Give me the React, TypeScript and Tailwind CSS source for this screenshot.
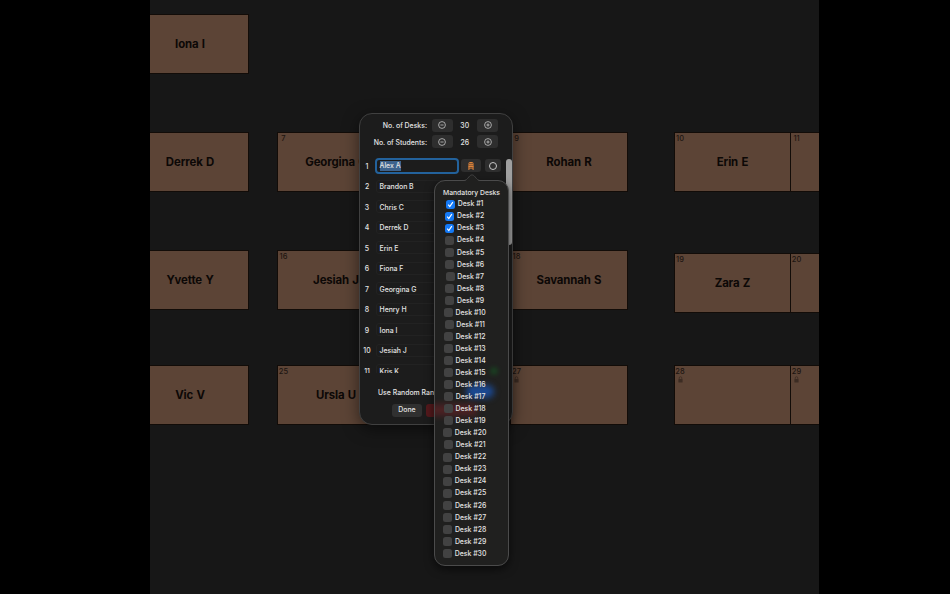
import { useState } from 'react';

type Desk = { x: number; y: number; num?: number; name?: string; locked?: boolean };

const desks: Desk[] = [
  { x: -19, y: 14, name: 'Iona I' },
  { x: -19, y: 132, name: 'Derrek D' },
  { x: 127, y: 132, num: 7, name: 'Georgina G' },
  { x: 360, y: 132, num: 9, name: 'Rohan R' },
  { x: 523.5, y: 132, num: 10, name: 'Erin E' },
  { x: 640, y: 132, num: 11 },
  { x: -19, y: 250, name: 'Yvette Y' },
  { x: 127, y: 250, num: 16, name: 'Jesiah J' },
  { x: 360, y: 250, num: 18, name: 'Savannah S' },
  { x: 523.5, y: 253, num: 19, name: 'Zara Z' },
  { x: 640, y: 253, num: 20 },
  { x: -19, y: 365, name: 'Vic V' },
  { x: 127, y: 365, num: 25, name: 'Ursla U' },
  { x: 360, y: 365, num: 27, locked: true },
  { x: 523.5, y: 365, num: 28, locked: true },
  { x: 640, y: 365, num: 29, locked: true },
];

const students = [
  'Alex A',
  'Brandon B',
  'Chris C',
  'Derrek D',
  'Erin E',
  'Fiona F',
  'Georgina G',
  'Henry H',
  'Iona I',
  'Jesiah J',
  'Kris K',
];

function DeskCard({ desk }: { desk: Desk }) {
  return (
    <div
      className="absolute w-[118px] h-[60px] border border-[#120c08] bg-[#5c4436] text-[#0c0806] flex items-center justify-center"
      style={{ left: desk.x, top: desk.y }}
    >
      {desk.num && (
        <div className="absolute left-0 top-[1px] w-[11px] flex flex-col items-center text-[7.5px] leading-[10px] text-[#1d1511]">
          <span>{desk.num}</span>
          {desk.locked && (
            <svg width="5" height="7" viewBox="0 0 5 7" className="-mt-px opacity-50">
              <path d="M1.2 3V2a1.3 1.3 0 0 1 2.6 0v1" fill="none" stroke="#1d1511" strokeWidth="0.8" />
              <rect x="0.4" y="3" width="4.2" height="3.5" rx="0.6" fill="#1d1511" />
            </svg>
          )}
        </div>
      )}
      <span className="pt-px text-[11.4px] font-bold tracking-[-0.12px] [word-spacing:0.8px] whitespace-nowrap">
        {desk.name}
      </span>
    </div>
  );
}

function Stepper({ label, value, onChange }: { label: string; value: number; onChange: (v: number) => void }) {
  const button = 'w-[21px] h-[13px] rounded-[3px] bg-[#2e2e2e] flex items-center justify-center text-[#cfcfcf]';
  return (
    <div className="flex items-center h-[16.5px]">
      <span className="w-[67px] pt-[2px] whitespace-nowrap flex justify-end">{label}</span>
      <button className={`${button} ml-[4.5px]`} onClick={() => onChange(value - 1)}>
        <svg width="8" height="8" viewBox="0 0 8 8" fill="none" stroke="currentColor" strokeWidth="0.75">
          <circle cx="4" cy="4" r="3.4" />
          <path d="M2.4 4h3.2" />
        </svg>
      </button>
      <span className="w-[24.5px] pt-[2px] text-center">{value}</span>
      <button className={button} onClick={() => onChange(value + 1)}>
        <svg width="8" height="8" viewBox="0 0 8 8" fill="none" stroke="currentColor" strokeWidth="0.75">
          <circle cx="4" cy="4" r="3.4" />
          <path d="M2.4 4h3.2M4 2.4v3.2" />
        </svg>
      </button>
    </div>
  );
}

function ChairIcon() {
  return (
    <svg width="6" height="8" viewBox="0 0 6 8" fill="none" stroke="#e0843a" strokeWidth="1">
      <path d="M1 4V1.1Q1 .5 1.6 .5H4.4Q5 .5 5 1.1V4M3 .5V4M1 2.7H5" />
      <path d="M.4 4.5H5.6M.9 4.5V8M5.1 4.5V8M1 6.1H5" />
    </svg>
  );
}

function MandatoryDesks() {
  const [checked, setChecked] = useState([1, 2, 3]);
  const toggle = (n: number) =>
    setChecked(checked.includes(n) ? checked.filter(c => c !== n) : [...checked, n]);

  return (
    <div className="absolute left-[434px] top-[180px] w-[75px] h-[386px] rounded-[11px] border border-[#4b4b4b] bg-[#20201f] shadow-[0_3px_10px_rgba(0,0,0,0.6)]">
      <svg width="18" height="8" viewBox="0 0 18 8" className="absolute left-[28px] -top-[7px]">
        <path d="M0 7C3 7 4 5.5 6 3C8 0.4 10 0.4 12 3C14 5.5 15 7 18 7V8H0Z" fill="#20201f" />
        <path d="M0 6.6C3 6.6 4 5.2 6 2.8C8 0.3 10 0.3 12 2.8C14 5.2 15 6.6 18 6.6" fill="none" stroke="#4b4b4b" strokeWidth="0.8" />
      </svg>
      {/* tinted glow of the controls underneath */}
      <div className="absolute inset-0 overflow-hidden rounded-[10px]">
        <div className="absolute left-[31px] top-[204px] w-[28px] h-[13px] rounded-full bg-[#1b4a95] blur-[3px]" />
        <div className="absolute -left-[6px] top-[223px] w-[48px] h-[12px] bg-[#6a2226] opacity-60 blur-[3px]" />
        <div className="absolute left-[55px] top-[186px] w-[8px] h-[8px] rounded-full bg-[#174b22] opacity-70 blur-[2px]" />
      </div>
      <div className="relative flex flex-col items-center pt-[6px]">
        <h2 className="text-[6.8px] leading-[11px] whitespace-nowrap">Mandatory Desks</h2>
        <div className="w-full pr-[13.5px] flex flex-col items-center">
          {Array.from({ length: 30 }, (_, i) => i + 1).map(n => (
            <button key={n} onClick={() => toggle(n)} className="flex items-center gap-[2.7px] h-[12.05px] whitespace-nowrap">
              {checked.includes(n) ? (
                <span className="size-[9px] rounded-[2.5px] bg-[#1479f5] flex items-center justify-center">
                  <svg width="7" height="7" viewBox="0 0 6 6" fill="none" stroke="white" strokeWidth="1">
                    <path d="M1 3.2L2.4 4.8L5 1" />
                  </svg>
                </span>
              ) : (
                <span className="size-[9px] rounded-[2.5px] bg-[#424242]" />
              )}
              <span className="pt-px">Desk #{n}</span>
            </button>
          ))}
        </div>
      </div>
    </div>
  );
}

export default function App() {
  const [deskCount, setDeskCount] = useState(30);
  const [studentCount, setStudentCount] = useState(26);

  return (
    <div className="relative w-[950px] h-[594px] bg-black pl-[150px] overflow-hidden font-['Inter','Liberation_Sans',sans-serif] text-[6.9px] font-medium text-[#e4e4e4]">
      <main className="relative w-[669px] h-full bg-[#171717] overflow-hidden">
        {desks.map((desk, i) => (
          <DeskCard key={i} desk={desk} />
        ))}
      </main>

      <section className="absolute left-[359px] top-[113px] w-[154px] h-[312px] rounded-[13px] border border-[#404040] bg-[#1c1c1c] shadow-[0_4px_16px_rgba(0,0,0,0.5)] flex flex-col pt-[3px]">
        <Stepper label="No. of Desks:" value={deskCount} onChange={setDeskCount} />
        <Stepper label="No. of Students:" value={studentCount} onChange={setStudentCount} />

        <div className="relative mt-[5.5px] h-[217px] overflow-hidden">
          {students.map((name, i) => (
            <div key={name} className="flex items-center h-[20.5px]">
              <span className="w-[14px] pt-[2px] text-center">{i + 1}</span>
              {i === 0 ? (
                <div className="ml-[1px] w-[84px] h-[16px] rounded-[4px] border-2 border-[#23629c] flex items-center px-[2.5px]">
                  <span className="bg-[#3d638d] leading-[10px]">{name}</span>
                </div>
              ) : (
                <div className="ml-[2px] w-[82px] h-[13px] rounded-[3px] border border-[#222] flex items-center pt-[2px] px-[2.5px]">
                  {name}
                </div>
              )}
              {i === 0 && (
                <>
                  <button className="ml-[2px] w-[20px] h-[13px] rounded-[3px] bg-[#2e2e2e] flex items-center justify-center">
                    <ChairIcon />
                  </button>
                  <button className="ml-[4px] w-[16px] h-[13px] rounded-[3px] bg-[#2e2e2e] flex items-center justify-center">
                    <span className="size-[8px] rounded-full border border-[#c6c6c6]" />
                  </button>
                </>
              )}
            </div>
          ))}
          <div className="absolute right-0 top-[3px] w-[6px] h-[86px] rounded-full bg-[#a0a0a0]" />
        </div>

        <div className="mt-[14px] ml-[18px] h-[14px] flex items-center whitespace-nowrap">Use Random Range</div>
        <div className="mt-[3px] ml-[32px] flex gap-[4px]">
          <button className="w-[30px] h-[13px] pt-px rounded-[3px] bg-[#303030]">Done</button>
          <button className="w-[40px] h-[13px] rounded-[3px] bg-[#54191c]" />
        </div>
      </section>

      <MandatoryDesks />
    </div>
  );
}
